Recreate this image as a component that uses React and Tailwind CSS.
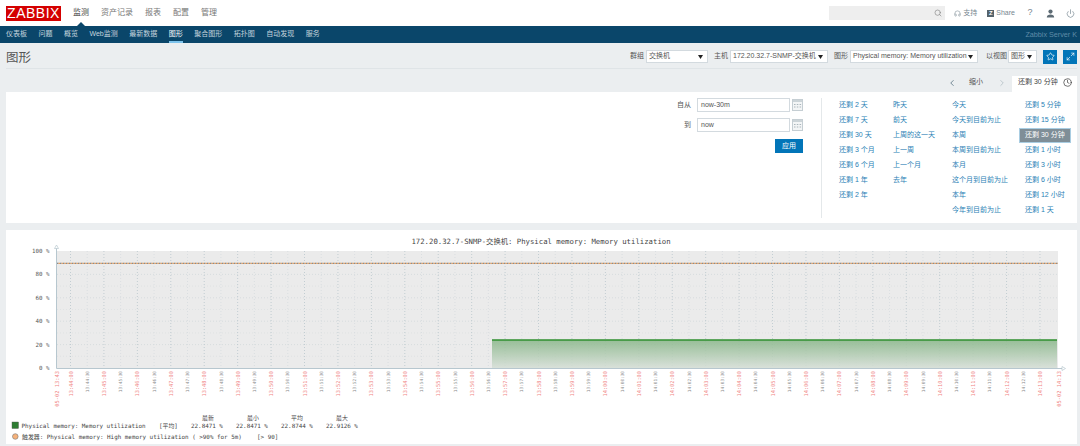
import React from "react";
import { Search, Headphones, Power, Star, Maximize2, Clock, ChevronLeft, ChevronRight } from "lucide-react";

const SANS = { fontFamily: '"Liberation Sans","Noto Sans CJK SC",sans-serif' };
const topMenu = ["监测", "资产记录", "报表", "配置", "管理"];
const subMenu = ["仪表板", "问题", "概览", "Web监测", "最新数据", "图形", "聚合图形", "拓扑图", "自动发现", "服务"];
const presets = [
  ["还剩 2 天", "还剩 7 天", "还剩 30 天", "还剩 3 个月", "还剩 6 个月", "还剩 1 年", "还剩 2 年"],
  ["昨天", "前天", "上周的这一天", "上一周", "上一个月", "去年"],
  ["今天", "今天到目前为止", "本周", "本周到目前为止", "本月", "这个月到目前为止", "本年", "今年到目前为止"],
  ["还剩 5 分钟", "还剩 15 分钟", "还剩 30 分钟", "还剩 1 小时", "还剩 3 小时", "还剩 6 小时", "还剩 12 小时", "还剩 1 天"],
];

function Caret() {
  return <svg width="5" height="4" viewBox="0 0 5 4" className="shrink-0"><path d="M0 0h5L2.5 4z" fill="#222" /></svg>;
}

function Select({ w, children }) {
  return (
    <div className={`${w} h-[13px] flex items-center justify-between bg-white border border-[#d3dadf] pl-[2px] pr-[4px] text-[7px] text-[#555] whitespace-nowrap overflow-hidden`}>
      <span>{children}</span>
      <Caret />
    </div>
  );
}

function Cal() {
  return (
    <svg width="11" height="12" viewBox="0 0 11 12" className="shrink-0">
      <rect x="0.5" y="0.5" width="10" height="11" fill="#f3f5f6" stroke="#c5ced3" />
      <rect x="1" y="1" width="9" height="2" fill="#ccd4d8" />
      <path d="M2 5.5h1.5M4.8 5.5h1.5M7.6 5.5h1.5M2 8h1.5M4.8 8h1.5M7.6 8h1.5" stroke="#aab5bb" />
    </svg>
  );
}

const X0 = 70.5, STEP = 33.43, T = (m) => String(m).padStart(2, "0");
function minuteLabel(i, s) {
  const total = 13 * 60 + 44 + i;
  return `${T(Math.floor(total / 60))}:${T(total % 60)}:${s}`;
}

function Chart() {
  const mono = '"DejaVu Sans Mono","Noto Sans CJK SC",monospace';
  const minutes = Array.from({ length: 30 }, (_, i) => i);
  const halves = Array.from({ length: 29 }, (_, i) => i);
  return (
    <svg viewBox="6 230 1071 214" width="1071" height="214" className="block">
      <defs>
        <linearGradient id="area" x1="0" y1="0" x2="0" y2="1">
          <stop offset="0" stopColor="#8cb88c" />
          <stop offset="1" stopColor="#d6dfd7" />
        </linearGradient>
      </defs>
      <text x="541" y="244" textAnchor="middle" fontFamily={mono} fontSize="7.3" fill="#444">172.20.32.7-SNMP-交换机: Physical memory: Memory utilization</text>
      <rect x="57" y="251" width="1001" height="117" fill="#ebebeb" />
      {[1, 2, 3, 4, 5, 6, 7, 8, 9].map((k) => (
        <line key={k} x1="57" x2="1058" y1={368 - 11.7 * k} y2={368 - 11.7 * k} stroke={k % 2 === 0 ? "#ced5d8" : "#dbdfe1"} strokeWidth="0.7" strokeDasharray="1 2" />
      ))}
      {halves.map((i) => (
        <line key={i} x1={X0 + STEP * (i + 0.5)} x2={X0 + STEP * (i + 0.5)} y1="251" y2="368" stroke="#d2d9dc" strokeWidth="0.7" strokeDasharray="1 2" />
      ))}
      {minutes.map((i) => (
        <line key={i} x1={X0 + STEP * i} x2={X0 + STEP * i} y1="251" y2="368" stroke="#b8c5cc" strokeWidth="0.8" strokeDasharray="1 2" />
      ))}
      <rect x="492" y="340" width="565" height="28" fill="url(#area)" fillOpacity="0.88" />
      <line x1="492" x2="1057" y1="340" y2="340" stroke="#2f8f2f" strokeWidth="1.4" />
      <line x1="57" x2="1058" y1="263.3" y2="263.3" stroke="#8b8b8b" strokeWidth="1.2" strokeDasharray="1.5 1.5" />
      <line x1="58.5" x2="1058" y1="263.3" y2="263.3" stroke="#e8a468" strokeWidth="1.2" strokeDasharray="1.5 1.5" />
      <line x1="56.5" x2="56.5" y1="248" y2="368.5" stroke="#b7c7cf" />
      <line x1="56.5" x2="1062" y1="368.5" y2="368.5" stroke="#b7c7cf" />
      <path d="M54.5 248.5 56.5 245 58.5 248.5z" fill="#fff" stroke="#b7c7cf" strokeWidth="0.7" />
      <path d="M1062 366.5 1065.5 368.5 1062 370.5z" fill="#fff" stroke="#b7c7cf" strokeWidth="0.7" />
      {[[100, 251], [80, 274.4], [60, 297.8], [40, 321.2], [20, 344.6], [0, 368]].map(([v, y]) => (
        <text key={v} x="49.5" y={y + 2} textAnchor="end" fontFamily={mono} fontSize="5.8" fill="#555">{v} %</text>
      ))}
      {halves.map((i) => (
        <text key={i} transform={`translate(${X0 + STEP * (i + 0.5) + 1.6} 371) rotate(-90)`} textAnchor="end" fontFamily={mono} fontSize="4.4" fill="#888">{minuteLabel(i, "30")}</text>
      ))}
      {minutes.map((i) => (
        <text key={i} transform={`translate(${X0 + STEP * i + 2} 371) rotate(-90)`} textAnchor="end" fontFamily={mono} fontSize="5.3" fill="#f08585">{minuteLabel(i, "00")}</text>
      ))}
      <text transform="translate(58.5 371) rotate(-90)" textAnchor="end" fontFamily={mono} fontSize="5.4" fill="#f08585">05-02 13:43</text>
      <text transform="translate(1061 371) rotate(-90)" textAnchor="end" fontFamily={mono} fontSize="5.4" fill="#f08585">05-02 14:13</text>
      <g fontFamily={mono} fontSize="5.9" fill="#444">
        <text x="202" y="419.5">最新</text>
        <text x="247" y="419.5">最小</text>
        <text x="291" y="419.5">平均</text>
        <text x="336" y="419.5">最大</text>
        <rect x="12" y="422" width="6.5" height="6.5" fill="#2e7d32" stroke="#555" strokeWidth="0.4" />
        <text x="21.5" y="428">Physical memory: Memory utilization</text>
        <text x="159" y="428">[平均]</text>
        <text x="191" y="428">22.8471 %</text>
        <text x="236" y="428">22.8471 %</text>
        <text x="281" y="428">22.8744 %</text>
        <text x="326" y="428">22.9126 %</text>
        <circle cx="15.3" cy="436.5" r="2.8" fill="#f6b27a" stroke="#777" strokeWidth="0.6" />
        <text x="22" y="439">触发器: Physical memory: High memory utilization ( &gt;90% for 5m)</text>
        <text x="257" y="439">[&gt; 90]</text>
      </g>
    </svg>
  );
}

export default function App() {
  return (
    <div style={SANS} className="w-[1080px] h-[446px] overflow-hidden bg-[#ebeef0] text-[#555]">
      {/* top bar */}
      <header className="h-[26px] bg-white flex items-center pl-[6px] pr-[3px]">
        <div className="w-[55px] h-[15px] bg-[#d40000] flex items-center justify-center text-white text-[14px] tracking-[0.5px] leading-none">
          <span>ZABBIX</span>
        </div>
        <nav className="flex gap-[12px] ml-[12px] text-[8px] text-[#777]">
          {topMenu.map((m) => <span key={m} className={m === "监测" ? "text-[#444]" : ""}>{m}</span>)}
        </nav>
        <div className="ml-auto flex items-center text-[7px] text-[#768690]">
          <div className="w-[116px] h-[14px] bg-[#eeeeee] flex items-center justify-end pr-[3px]">
            <Search size={8} strokeWidth={2} className="text-[#888]" />
          </div>
          <div className="flex items-center gap-[2px] ml-[9px]"><Headphones size={7} strokeWidth={1.8} /><span>支持</span></div>
          <div className="flex items-center gap-[2px] ml-[10px]">
            <span className="w-[7px] h-[7px] bg-[#55636c] text-white text-[6px] leading-[7px] text-center font-bold">Z</span>
            <span>Share</span>
          </div>
          <span className="ml-[12px] text-[9px] w-[6px] text-center">?</span>
          <svg width="9" height="9" viewBox="0 0 9 9" className="ml-[13px]"><circle cx="4.5" cy="2.6" r="2.1" fill="#5d6b74" /><path d="M.8 8.6c0-2.3 1.7-3 3.7-3s3.7.7 3.7 3z" fill="#5d6b74" /></svg>
          <Power size={9} strokeWidth={1.8} className="ml-[11px] mr-[2px]" />
        </div>
      </header>

      {/* sub nav */}
      <div className="relative h-[17px] bg-[#0a466a] flex items-center pl-[6px] text-[7px] text-[#c4d4de]">
        <span className="absolute left-[77px] -top-[4px] w-0 h-0 border-l-[4px] border-r-[4px] border-b-[4px] border-l-transparent border-r-transparent border-b-[#0a466a]" />
        <nav className="flex gap-[11.5px] h-full">
          {subMenu.map((m) => (
            <span key={m} className={`h-full flex items-center pt-[2px] border-b-2 ${m === "图形" ? "border-[#7dc3ec] text-white" : "border-transparent"}`}>{m}</span>
          ))}
        </nav>
        <span className="ml-auto mr-[3px] mt-[2px] text-[#5f8ca8] text-[7.2px]">Zabbix Server K</span>
      </div>

      {/* title row */}
      <div className="mx-[6px] w-[1071px] h-[26px] border-b border-[#dfe4e7] flex items-center justify-between">
        <h1 className="mt-[5px] text-[12.5px] text-[#555] font-normal">图形</h1>
        <div className="mt-[2px] flex items-center text-[7px] text-[#555]">
          <span className="mr-[2px]">群组</span>
          <Select w="w-[62px]">交换机</Select>
          <span className="ml-[6px] mr-[2px]">主机</span>
          <Select w="w-[98px]">172.20.32.7-SNMP-交换机</Select>
          <span className="ml-[6px] mr-[2px]">图形</span>
          <Select w="w-[128px]">Physical memory: Memory utilization</Select>
          <span className="ml-[8px] mr-[1px]">以视图</span>
          <Select w="w-[29px]">图形</Select>
          <button className="ml-[6px] w-[14px] h-[14px] bg-[#0275b8] flex items-center justify-center"><Star size={9} color="#fff" strokeWidth={1.8} /></button>
          <button className="ml-[6px] w-[14px] h-[14px] bg-[#0275b8] flex items-center justify-center"><Maximize2 size={9} color="#fff" strokeWidth={1.8} /></button>
        </div>
      </div>

      {/* time row */}
      <div className="mx-[6px] w-[1071px] h-[23px] flex items-end justify-end text-[7px] text-[#555]">
        <div className="flex items-center h-[16px] pb-[3px]">
          <ChevronLeft size={10} strokeWidth={2} className="text-[#5b7583]" />
          <span className="ml-[12px]">缩小</span>
          <ChevronRight size={10} strokeWidth={2} className="ml-[14px] text-[#b4c0c7]" />
        </div>
        <div className="ml-[5px] w-[65px] h-[16px] bg-white flex items-center pl-[6px] pb-[3px]">
          <span className="text-[#444]">还剩 30 分钟</span>
          <Clock size={9} strokeWidth={1.8} className="ml-[5.5px] text-[#333]" />
        </div>
      </div>

      {/* filter panel */}
      <section className="mx-[6px] w-[1071px] h-[131px] bg-white flex text-[7px]">
        <div className="w-[815px] pt-[6px] pr-[18px] flex flex-col items-end">
          <div className="flex items-center h-[14px]">
            <span className="mr-[6px]">自从</span>
            <div className="w-[93px] h-[14px] border border-[#d3dadf] pl-[3px] flex items-center text-[#555]">now-30m</div>
            <span className="ml-[2px]"><Cal /></span>
          </div>
          <div className="flex items-center h-[14px] mt-[6px]">
            <span className="mr-[6px]">到</span>
            <div className="w-[93px] h-[14px] border border-[#d3dadf] pl-[3px] flex items-center text-[#555]">now</div>
            <span className="ml-[2px]"><Cal /></span>
          </div>
          <button className="mt-[7px] w-[28px] h-[14px] bg-[#0275b8] text-white text-[7px]">应用</button>
        </div>
        <div className="w-px h-[120px] mt-[6px] bg-[#e4e8ea]" />
        <div className="flex pt-[5.5px] pl-[17px] text-[#2a7fb5]">
          {presets.map((col, c) => (
            <div key={c} className={["w-[54px]", "w-[59px]", "w-[73px]", "w-[52px]"][c]}>
              {col.map((p) => (
                <div key={p} className="h-[15.1px] flex items-center whitespace-nowrap">
                  {p === "还剩 30 分钟" ? (
                    <span className="-ml-[6px] w-[52px] h-[15px] pl-[5px] flex items-center bg-[#7f8e97] text-white border border-[#a9cde2]">{p}</span>
                  ) : p}
                </div>
              ))}
            </div>
          ))}
        </div>
      </section>

      {/* graph */}
      <section className="mx-[6px] mt-[7px] w-[1071px] h-[214px] bg-white">
        <Chart />
      </section>
    </div>
  );
}
